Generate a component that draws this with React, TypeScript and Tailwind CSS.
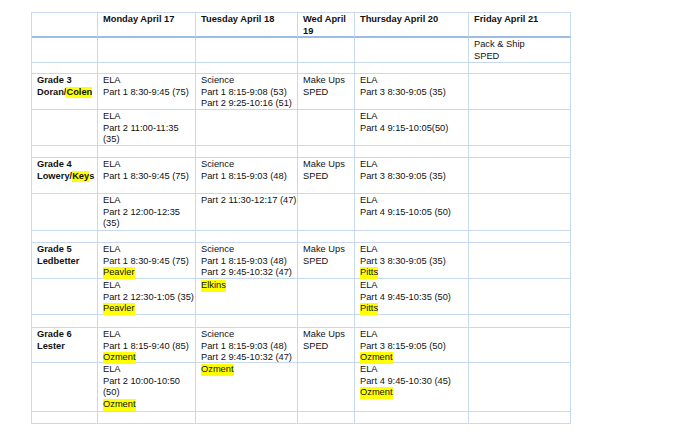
import React from "react";

const Hl = ({ children }: { children: React.ReactNode }) => (
  <span className="inline-block bg-[#ffff00] leading-[11.7px] align-top">{children}</span>
);

type Row = { h: string; head?: boolean; cells: React.ReactNode[] };

const L = ({ children }: { children: React.ReactNode }) => <div className="whitespace-nowrap">{children}</div>;

const rows: Row[] = [
  {
    h: "h-[25px]",
    head: true,
    cells: [
      "",
      <b>Monday April 17</b>,
      <b>Tuesday April 18</b>,
      <b><L>Wed April</L><L>19</L></b>,
      <b>Thursday April 20</b>,
      <b>Friday April 21</b>,
    ],
  },
  {
    h: "h-[25px]",
    cells: ["", "", "", "", "", <><L>Pack &amp; Ship</L><L>SPED</L></>],
  },
  { h: "h-[11px]", cells: ["", "", "", "", "", ""] },
  {
    h: "h-[36px]",
    cells: [
      <b><L>Grade 3</L><L>Doran/<Hl>Colen</Hl></L></b>,
      <><L>ELA</L><L>Part 1 8:30-9:45 (75)</L></>,
      <><L>Science</L><L>Part 1 8:15-9:08 (53)</L><L>Part 2 9:25-10:16 (51)</L></>,
      <><L>Make Ups</L><L>SPED</L></>,
      <><L>ELA</L><L>Part 3 8:30-9:05 (35)</L></>,
      "",
    ],
  },
  {
    h: "h-[36px]",
    cells: [
      "",
      <><L>ELA</L><L>Part 2 11:00-11:35</L><L>(35)</L></>,
      "",
      "",
      <><L>ELA</L><L>Part 4 9:15-10:05(50)</L></>,
      "",
    ],
  },
  { h: "h-[12px]", cells: ["", "", "", "", "", ""] },
  {
    h: "h-[36px]",
    cells: [
      <b><L>Grade 4</L><L>Lowery/<Hl>Key</Hl>s</L></b>,
      <><L>ELA</L><L>Part 1 8:30-9:45 (75)</L></>,
      <><L>Science</L><L>Part 1 8:15-9:03 (48)</L></>,
      <><L>Make Ups</L><L>SPED</L></>,
      <><L>ELA</L><L>Part 3 8:30-9:05 (35)</L></>,
      "",
    ],
  },
  {
    h: "h-[37px]",
    cells: [
      "",
      <><L>ELA</L><L>Part 2 12:00-12:35</L><L>(35)</L></>,
      <L>Part 2 11:30-12:17 (47)</L>,
      "",
      <><L>ELA</L><L>Part 4 9:15-10:05 (50)</L></>,
      "",
    ],
  },
  { h: "h-[12px]", cells: ["", "", "", "", "", ""] },
  {
    h: "h-[36px]",
    cells: [
      <b><L>Grade 5</L><L>Ledbetter</L></b>,
      <><L>ELA</L><L>Part 1 8:30-9:45 (75)</L><L><Hl>Peavler</Hl></L></>,
      <><L>Science</L><L>Part 1 8:15-9:03 (48)</L><L>Part 2 9:45-10:32 (47)</L></>,
      <><L>Make Ups</L><L>SPED</L></>,
      <><L>ELA</L><L>Part 3 8:30-9:05 (35)</L><L><Hl>Pitts</Hl></L></>,
      "",
    ],
  },
  {
    h: "h-[36px]",
    cells: [
      "",
      <><L>ELA</L><L>Part 2 12:30-1:05 (35)</L><L><Hl>Peavler</Hl></L></>,
      <L><Hl>Elkins</Hl></L>,
      "",
      <><L>ELA</L><L>Part 4 9:45-10:35 (50)</L><L><Hl>Pitts</Hl></L></>,
      "",
    ],
  },
  { h: "h-[13px]", cells: ["", "", "", "", "", ""] },
  {
    h: "h-[35px]",
    cells: [
      <b><L>Grade 6</L><L>Lester</L></b>,
      <><L>ELA</L><L>Part 1 8:15-9:40 (85)</L><L><Hl>Ozment</Hl></L></>,
      <><L>Science</L><L>Part 1 8:15-9:03 (48)</L><L>Part 2 9:45-10:32 (47)</L></>,
      <><L>Make Ups</L><L>SPED</L></>,
      <><L>ELA</L><L>Part 3 8:15-9:05 (50)</L><L><Hl>Ozment</Hl></L></>,
      "",
    ],
  },
  {
    h: "h-[49px]",
    cells: [
      "",
      <><L>ELA</L><L>Part 2 10:00-10:50</L><L>(50)</L><L><Hl>Ozment</Hl></L></>,
      <L><Hl>Ozment</Hl></L>,
      "",
      <><L>ELA</L><L>Part 4 9:45-10:30 (45)</L><L><Hl>Ozment</Hl></L></>,
      "",
    ],
  },
  { h: "h-[12px]", cells: ["", "", "", "", "", ""] },
];

export default function App() {
  return (
    <div className="w-[700px] h-[443px] bg-white overflow-hidden pt-[12px] pl-[31px] font-['Liberation_Sans',Arial,sans-serif] text-[9.3px] leading-[11.7px] text-[#111]">
      <div className="grid grid-cols-[66px_98px_102px_57px_114px_102px] w-[540px] border-l border-t border-[#c6d9f0]">
        {rows.map((r, ri) =>
          r.cells.map((c, ci) => (
            <div
              key={`${ri}-${ci}`}
              className={
                r.head
                  ? `${r.h} border-r border-r-[#c6d9f0] border-b-2 border-b-[#9dbce2] pl-[5px] pt-px whitespace-nowrap`
                  : `${r.h} border-r border-b border-[#c6d9f0] pl-[5px] pt-px whitespace-nowrap`
              }
            >
              {c}
            </div>
          ))
        )}
      </div>
    </div>
  );
}
